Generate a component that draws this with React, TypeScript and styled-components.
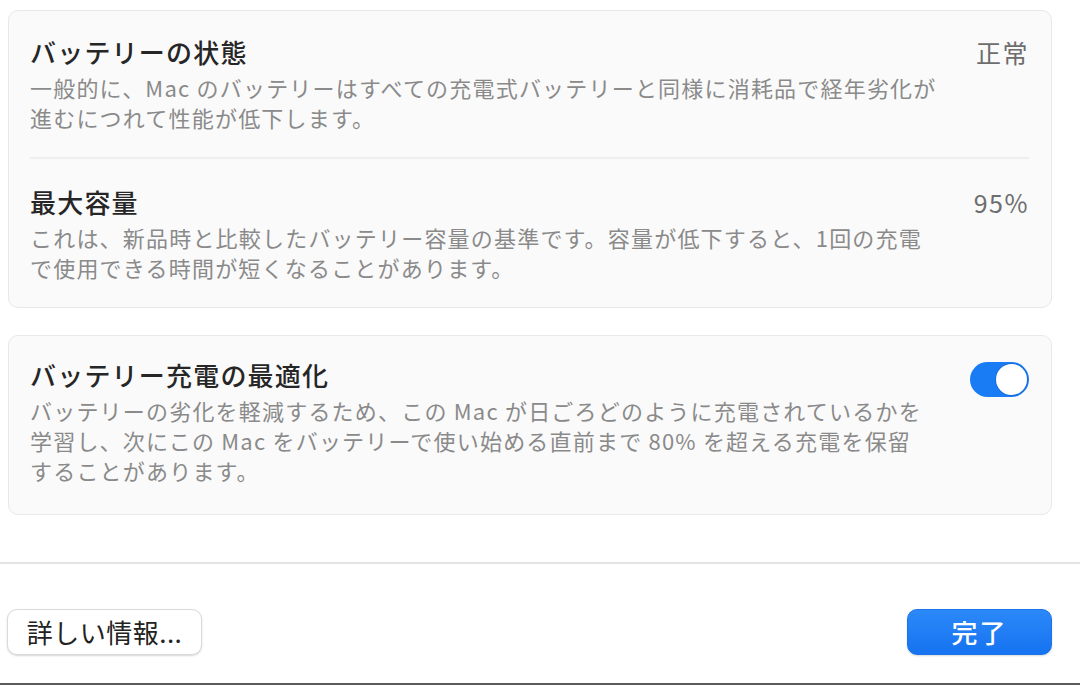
import React from 'react'
import styled, { createGlobalStyle } from 'styled-components'

const GlobalStyle = createGlobalStyle`
  html, body {
    margin: 0;
    padding: 0;
    background: #ffffff;
  }
  body {
    font-family: "Noto Sans CJK JP", "Noto Sans", "Liberation Sans", sans-serif;
  }
`

const Window = styled.div`
  width: 1080px;
  height: 685px;
  display: flex;
  flex-direction: column;
  background: #ffffff;
  box-sizing: border-box;
  border-bottom: 2px solid #5b5b5b;
  overflow: hidden;
`

const Content = styled.div`
  display: flex;
  flex-direction: column;
  gap: 27px;
  padding: 10px 28px 0 8px;
`

const Card = styled.section`
  background: #fafafa;
  border: 1px solid #e8e8e8;
  border-radius: 10px;
  padding: 0 22px 0 21px;
`

const Row = styled.div<{ $top: number; $bottom: number; $divider?: boolean }>`
  display: flex;
  align-items: flex-start;
  justify-content: space-between;
  gap: 20px;
  padding: ${p => p.$top}px 0 ${p => p.$bottom}px;
  border-bottom: ${p => (p.$divider ? '2px solid #eeeeee' : 'none')};
`

const Text = styled.div`
  display: flex;
  flex-direction: column;
  gap: 4px;
`

const Title = styled.div`
  font-size: 26px;
  line-height: 32px;
  letter-spacing: 1.2px;
  font-weight: 500;
  color: #262626;
  white-space: nowrap;
`

const Desc = styled.div`
  font-size: 22px;
  line-height: 30px;
  letter-spacing: 1.2px;
  color: #8a8a8a;
  white-space: nowrap;
`

const Value = styled.div`
  font-size: 25px;
  line-height: 32px;
  letter-spacing: 1.5px;
  color: #6d6d6d;
  white-space: nowrap;
`

const Toggle = styled.div`
  width: 59px;
  height: 35px;
  margin-top: 3px;
  border-radius: 18px;
  background: #1a7cf5;
  display: flex;
  align-items: center;
  justify-content: flex-end;
  padding: 2px;
  box-sizing: border-box;
  flex-shrink: 0;
`

const Knob = styled.div`
  width: 31px;
  height: 31px;
  border-radius: 50%;
  background: #ffffff;
  box-shadow: 0 0 0 1px rgba(0, 60, 160, 0.25);
`

const Spacer = styled.div`
  flex: 1;
`

const Footer = styled.footer`
  border-top: 2px solid #e4e4e4;
  height: 121px;
  flex-shrink: 0;
  box-sizing: border-box;
  display: flex;
  align-items: flex-start;
  justify-content: space-between;
  padding: 45px 28px 0 7px;
`

const Button = styled.button<{ $primary?: boolean }>`
  height: 46px;
  padding: 0 16px;
  border-radius: 10px;
  font-family: inherit;
  font-size: 26px;
  line-height: 1;
  letter-spacing: ${p => (p.$primary ? '2px' : '0.5px')};
  font-weight: ${p => (p.$primary ? 500 : 400)};
  color: ${p => (p.$primary ? '#ffffff' : '#222222')};
  background: ${p => (p.$primary ? 'linear-gradient(#2b89f8, #1673f1)' : '#ffffff')};
  border: 1px solid ${p => (p.$primary ? '#1b74ea' : '#dadada')};
  box-shadow: 0 1px 2px rgba(0, 0, 0, 0.16);
  min-width: ${p => (p.$primary ? '145px' : '195px')};
  cursor: pointer;
`

export default function App() {
  return (
    <>
      <GlobalStyle />
      <Window>
        <Content>
          <Card>
            <Row $top={25} $bottom={25} $divider>
              <Text>
                <Title>バッテリーの状態</Title>
                <Desc>
                  一般的に、Mac のバッテリーはすべての充電式バッテリーと同様に消耗品で経年劣化が
                  <br />
                  進むにつれて性能が低下します。
                </Desc>
              </Text>
              <Value>正常</Value>
            </Row>
            <Row $top={27} $bottom={25}>
              <Text>
                <Title>最大容量</Title>
                <Desc>
                  これは、新品時と比較したバッテリー容量の基準です。容量が低下すると、1回の充電
                  <br />
                  で使用できる時間が短くなることがあります。
                </Desc>
              </Text>
              <Value>95%</Value>
            </Row>
          </Card>
          <Card>
            <Row $top={23} $bottom={29}>
              <Text>
                <Title>バッテリー充電の最適化</Title>
                <Desc>
                  バッテリーの劣化を軽減するため、この Mac が日ごろどのように充電されているかを
                  <br />
                  学習し、次にこの Mac をバッテリーで使い始める直前まで 80% を超える充電を保留
                  <br />
                  することがあります。
                </Desc>
              </Text>
              <Toggle>
                <Knob />
              </Toggle>
            </Row>
          </Card>
        </Content>
        <Spacer />
        <Footer>
          <Button>詳しい情報...</Button>
          <Button $primary>完了</Button>
        </Footer>
      </Window>
    </>
  )
}
